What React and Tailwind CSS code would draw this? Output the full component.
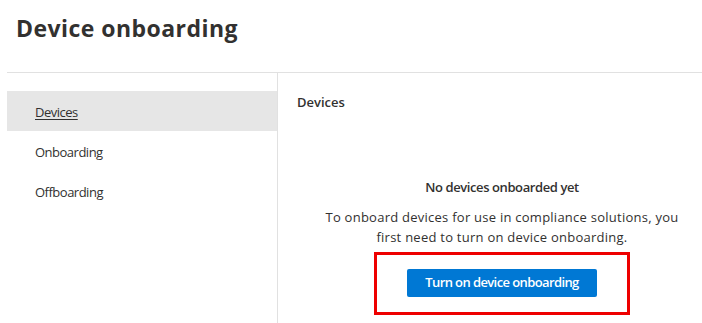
import React, { useState } from "react";

const NAV_ITEMS = ["Devices", "Onboarding", "Offboarding"];

function App() {
  const [active, setActive] = useState("Devices");

  return (
    <div className="w-[702px] h-[323px] bg-white overflow-hidden text-[#323130] font-['Open_Sans',sans-serif]">
      <h1 className="h-[72px] pl-4 pt-[12px] text-[23px] leading-[32px] font-bold tracking-[0.45px]">
        Device onboarding
      </h1>

      <div className="ml-[7px] flex h-[251px] border-t border-[#e1e1e1]">
        <nav className="w-[271px] shrink-0 border-r border-[#e1e1e1] pt-[18px]">
          {NAV_ITEMS.map((item) => (
            <button
              key={item}
              onClick={() => setActive(item)}
              className={`flex h-10 w-full items-center pl-[28px] pt-[4px] text-left text-[13px] tracking-[-0.5px] ${
                active === item ? "bg-[#e6e6e6] underline underline-offset-2" : ""
              }`}
            >
              {item}
            </button>
          ))}
        </nav>

        <main className="flex-1 pl-[19px] pt-[19px]">
          <h2 className="text-[13px] leading-5 font-semibold">Devices</h2>

          <div className="mt-[65px] flex flex-col items-center pl-[5px] text-center">
            <p className="text-[13px] leading-5 font-semibold tracking-[-0.4px]">No devices onboarded yet</p>
            <p className="mt-[10px] w-[370px] text-[13px] leading-5 tracking-[0.25px]">
              To onboard devices for use in compliance solutions, you first need to turn on device onboarding.
            </p>
            <div className="mt-[5px] border-[3px] border-[#ee0000] px-[30px] pt-[14px] pb-[15px]">
              <button className="h-7 w-[190px] rounded-[2px] bg-[#0078d4] text-[13px] font-semibold tracking-[-0.6px] text-white">
                Turn on device onboarding
              </button>
            </div>
          </div>
        </main>
      </div>
    </div>
  );
}

export default App;
